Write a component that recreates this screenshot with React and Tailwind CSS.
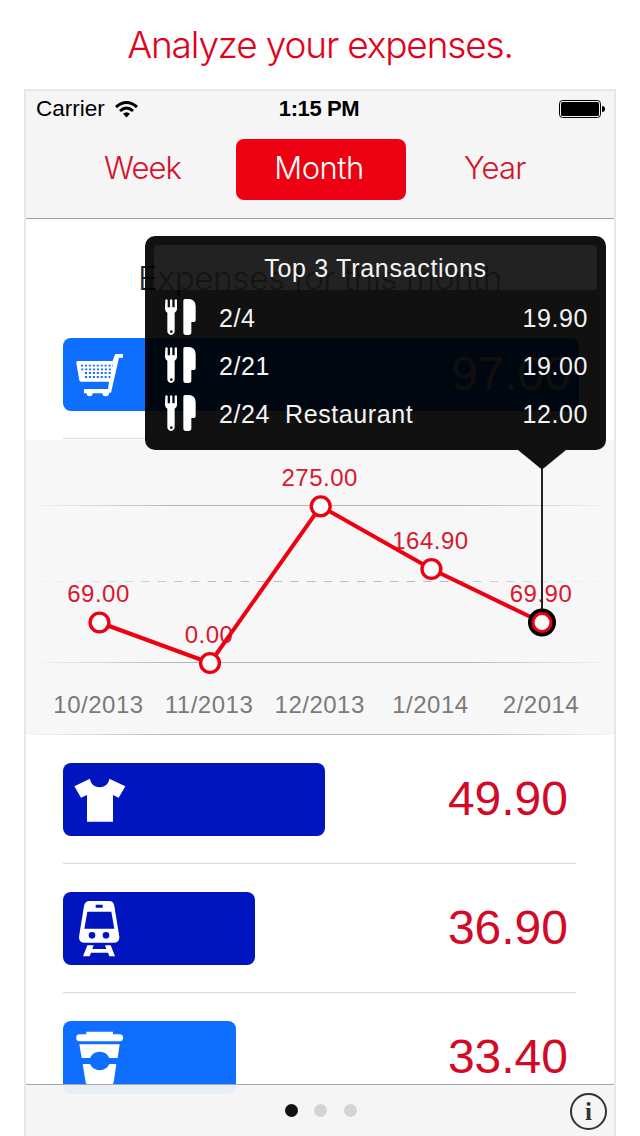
import React from 'react';

const CartIcon = () => (
  <svg className="h-[74px] w-[74px]" viewBox="129 339 222 222" fill="#fff">
    <path d="M289 387h20v11h-12l-24 105h-6a9 9 0 01-20 2h-29a9 9 0 01-18 0h-8v-13h72l3-22h-84q-4 0-5-4l-9-52q-1-6 4-6h105l6-17q1-4 5-4z" />
    <g stroke="#0d6eff" strokeWidth="5.5" strokeDasharray="6 5.8">
      <path d="M183 422h96" />
      <path d="M184 433h94" />
      <path d="M195 444h82" />
      <path d="M195 456h76" />
    </g>
  </svg>
);

const ShirtIcon = () => (
  <svg className="h-[74px] w-[74px]" viewBox="39 37 222 222" fill="#fff">
    <path d="M73 107l47-23c4 34 54 34 58 0l48 23-20 34-17-8v80h-78v-80l-18 8z" />
  </svg>
);

const TrainIcon = () => (
  <svg className="h-[74px] w-[74px]" viewBox="39 426 222 222" fill="#fff">
    <path
      fillRule="evenodd"
      d="M119 453h58q14 0 16 15l15 92q1 17-15 18h-91q-16-1-15-18l15-92q3-15 17-15zM137 464v9h21v-9zM112 485l-9 51h90l-9-51zM126 546a10 10 0 100 20 10 10 0 000-20zM168 546a10 10 0 100 20 10 10 0 000-20z"
    />
    <path d="M112 586h19l-4 11h42l-4-11h17l13 33h-17l-4-11h-51l-4 11h-20z" />
  </svg>
);

const CupIcon = () => (
  <svg className="h-[74px] w-[74px]" viewBox="39 123 222 222" fill="#fff">
    <path d="M109 155h80v8h20a10 10 0 010 21H89a10 10 0 010-21h20z" />
    <path d="M88 193h121l-6 41h-25a32 32 0 00-58 0H95z" />
    <path d="M98 252h22a32 32 0 0058 0h21l-8 55q-1 7-7 7h-70q-6 0-7-7z" />
  </svg>
);

const CutleryIcon = () => (
  <svg className="h-9 w-8 shrink-0" viewBox="0 0 96 108" fill="#fff">
    <path
      fillRule="evenodd"
      d="M1 3q3-4 7 0v22h7V3q3-4 7 0v22h7V3q4-4 7 0v26q0 9-7 12v56q-1 10-11 11-10-1-11-11V41q-7-3-7-12zM19 94a4 4 0 100 8 4 4 0 000-8z"
    />
    <path d="M60 0h13q19 2 19 22v42q0 5-5 5h-8v31q0 8-8 8h-8q-8 0-8-8V5q0-5 5-5z" />
  </svg>
);

const categories = [
  { amount: '49.90', width: 'w-[262px]', color: 'bg-[#0014c0]', icon: ShirtIcon },
  { amount: '36.90', width: 'w-[192px]', color: 'bg-[#0014c0]', icon: TrainIcon },
  { amount: '33.40', width: 'w-[173px]', color: 'bg-[#0d6eff]', icon: CupIcon },
];

const transactions = [
  { date: '2/4', name: '', amount: '19.90' },
  { date: '2/21', name: '', amount: '19.00' },
  { date: '2/24', name: 'Restaurant', amount: '12.00' },
];

const points = [
  { month: '10/2013', value: '69.00', x: 73.5, y: 181.5 },
  { month: '11/2013', value: '0.00', x: 184, y: 222 },
  { month: '12/2013', value: '275.00', x: 294.7, y: 65.3 },
  { month: '1/2014', value: '164.90', x: 405.4, y: 128 },
  { month: '2/2014', value: '69.90', x: 516, y: 181.5 },
];

const CategoryRow = ({ amount, width, color, icon: Icon, textColor = 'text-[#d20a28]' }) => (
  <div className="mr-[38px] ml-[37px] grid h-[129px] items-start border-b border-[#d9dcdc] pt-7">
    <div className={`col-start-1 row-start-1 h-[73px] rounded-lg ${width} ${color}`}>
      <Icon />
    </div>
    <div className={`col-start-1 row-start-1 pr-2 text-right text-5xl leading-[72px] ${textColor}`}>
      {amount}
    </div>
  </div>
);

const StatusBar = () => (
  <div className="flex h-9 items-center justify-between pr-[9px] pl-[10px] text-[22.5px] leading-9 text-black">
    <div className="flex w-40 items-center gap-[10px]">
      <span>Carrier</span>
      <svg className="h-[17px] w-[23px]" viewBox="0 0 23 17" fill="none" stroke="#000">
        <path d="M1 6Q11.500-3 22 6" strokeWidth="3" />
        <path d="M5 10Q11.500 4 18 10" strokeWidth="3" />
        <path d="M8 12.800Q11.500 9.500 15 12.800L11.500 16.500z" fill="#000" stroke="none" />
      </svg>
    </div>
    <span className="pr-[3px] text-[22px] font-bold tracking-[-0.4px]">1:15 PM</span>
    <div className="flex w-40 justify-end">
      <svg className="h-[18px] w-[46px]" viewBox="0 0 46 18">
        <rect x="0.500" y="0.500" width="41" height="17" rx="3" fill="none" stroke="#000" />
        <rect x="2" y="2" width="38" height="14" rx="1.500" />
        <path d="M43 6q3 0 3 3t-3 3z" />
      </svg>
    </div>
  </div>
);

const Chart = () => (
  <svg className="block h-[294px] w-[588px] bg-[#f7f7f7]" viewBox="0 0 588 294">
    <defs>
      <linearGradient id="fade" gradientUnits="userSpaceOnUse" x1="0" y1="0" x2="588" y2="0">
        <stop offset="0" stopColor="#b4b6b8" stopOpacity="0" />
        <stop offset="0.250" stopColor="#b4b6b8" />
        <stop offset="0.750" stopColor="#b4b6b8" />
        <stop offset="1" stopColor="#b4b6b8" stopOpacity="0" />
      </linearGradient>
      <linearGradient id="fadeDash" gradientUnits="userSpaceOnUse" x1="0" y1="0" x2="588" y2="0">
        <stop offset="0" stopColor="#b8b8dc" stopOpacity="0" />
        <stop offset="0.300" stopColor="#b8b8dc" />
        <stop offset="0.700" stopColor="#b8b8dc" />
        <stop offset="1" stopColor="#b8b8dc" stopOpacity="0" />
      </linearGradient>
    </defs>

    {/* grid */}
    <g stroke="url(#fade)">
      <path d="M0 64.500H588" />
      <path d="M0 221.500H588" />
      <path d="M0 293.500H588" />
    </g>
    <path d="M15.500 140.500H588" stroke="url(#fadeDash)" strokeDasharray="8.300 8.300" />

    {/* labels */}
    <g fontSize="24" textAnchor="middle" letterSpacing="0.500">
      {points.map((p) => (
        <React.Fragment key={p.month}>
          <text x={p.x - 1} y={p.y - 20.5} fill="#d81831">{p.value}</text>
          <text x={p.x - 1} y="271.500" fill="#7a7a7a">{p.month}</text>
        </React.Fragment>
      ))}
    </g>

    <polyline
      points={points.map((p) => `${p.x},${p.y}`).join(' ')}
      fill="none"
      stroke="#ed0011"
      strokeWidth="4"
    />
    <path d="M516 20V170" stroke="#222" strokeWidth="2" />
    <circle cx="516" cy="181.500" r="14" fill="#000" />
    {points.map((p, i) => (
      <circle
        key={p.month}
        cx={p.x}
        cy={p.y}
        r={i === 4 ? 9 : 9.4}
        fill="#fff"
        stroke="#ed0011"
        strokeWidth={i === 4 ? 3 : 3.4}
      />
    ))}
  </svg>
);

const Popover = () => (
  <div className="absolute top-[145px] left-[119px] w-[461px] text-[25px] tracking-[0.6px] text-[#f4f4f4]">
    <div className="h-[214px] rounded-[10px] bg-black/[0.933] px-[9px] pt-[9px]">
      <div className="h-[45px] rounded bg-white/[0.075] text-center leading-[47px] tracking-[0.7px]">
        Top 3 Transactions
      </div>
      <div className="pr-[9px] pl-[11px] pt-[3px]">
        {transactions.map((t) => (
          <div key={t.date} className="flex h-12 items-center leading-[48px]">
            <CutleryIcon />
            <span className="ml-[22px] pt-[2px]">{t.date}</span>
            <span className="ml-[15px] pt-[2px]">{t.name}</span>
            <span className="ml-auto pt-[2px]">{t.amount}</span>
          </div>
        ))}
      </div>
    </div>
    <svg className="ml-[373px] block h-5 w-12" viewBox="0 0 48 20">
      <path d="M0 0H48L26 18Q24 20 22 18z" fill="#111" />
    </svg>
  </div>
);

const App = () => {
  return (
    <div className="flex h-[1136px] w-[640px] flex-col overflow-hidden bg-white font-['Liberation_Sans',Arial,sans-serif]">
      <h1 className="h-[89px] shrink-0 text-center font-['Inter',sans-serif] text-[37px] leading-[90px] font-light tracking-[-1.15px] text-[#e3001b]">
        Analyze your expenses.
      </h1>

      <div className="relative mx-6 h-[1047px] overflow-hidden border-2 border-b-0 border-[#e3e8e8]">
        <header className="h-32 border-b border-[#a0a0a0] bg-[#f5f5f5]">
          <StatusBar />
          <nav className="mx-8 mt-3 flex h-[61px] font-['Inter',sans-serif] text-[31px] leading-[58px] font-light text-[#d4112b]">
            <div className="w-[178px] pl-[46px] tracking-[-0.9px]">Week</div>
            <div className="w-[170px] rounded-lg bg-[#ed0011] pr-1 text-center tracking-[-0.5px] text-white">
              Month
            </div>
            <div className="pl-[58px] tracking-[-0.8px]">Year</div>
          </nav>
        </header>

        <h2 className="h-[91px] pt-[37px] text-center font-['Inter',sans-serif] text-[33px] leading-[44px] font-light tracking-[-0.25px] text-[#222]">
          Expenses for this month
        </h2>
        <CategoryRow
          amount="97.00"
          width="w-[516px]"
          color="bg-[#0d6eff]"
          icon={CartIcon}
          textColor="text-[#ffd8b8]"
        />
        <div className="h-[2px] border-b border-[#f7f7f7]" />
        <Chart />
        {categories.map((c) => (
          <CategoryRow key={c.amount} {...c} />
        ))}

        <Popover />

        <footer className="absolute inset-x-0 bottom-0 flex h-[52px] items-center justify-center gap-[16.5px] border-t border-[#a8a8a8] bg-[#f4f4f4]/95 pl-[1px]">
          <span className="h-[13px] w-[13px] rounded-full bg-[#111]" />
          <span className="h-[13px] w-[13px] rounded-full bg-[#d4d4d4]" />
          <span className="h-[13px] w-[13px] rounded-full bg-[#d4d4d4]" />
          <div className="absolute top-2 right-[7px] flex h-[37px] w-[37px] items-center justify-center rounded-full border-2 border-[#333] font-['Liberation_Serif',serif] text-[25px] leading-none font-bold text-[#333]">
            i
          </div>
        </footer>
      </div>
    </div>
  );
};

export default App;
